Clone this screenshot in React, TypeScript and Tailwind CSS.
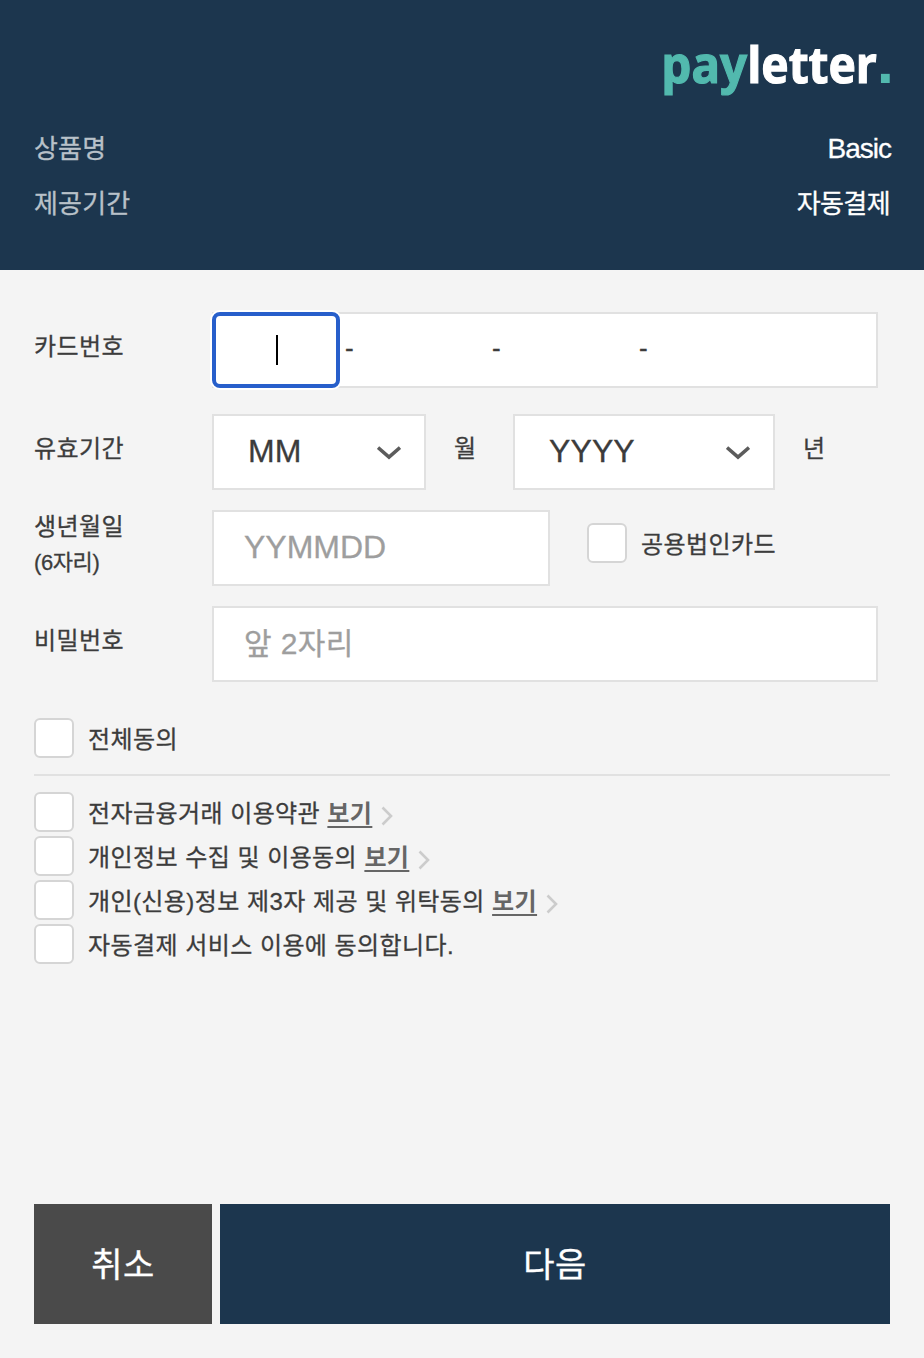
import type { ReactNode } from 'react';

const TERMS = [
  { label: '전자금융거래 이용약관', hasLink: true },
  { label: '개인정보 수집 및 이용동의', hasLink: true },
  { label: '개인(신용)정보 제3자 제공 및 위탁동의', hasLink: true },
  { label: '자동결제 서비스 이용에 동의합니다.', hasLink: false },
];

function Logo() {
  return (
    <svg
      width="226"
      height="50"
      viewBox="0 0 226 50"
      className="block overflow-visible font-['Noto_Sans'] font-bold tracking-normal [-webkit-text-stroke:0]"
      fontSize="51"
    >
      <text x="-2.5" y="38.5" textLength="85.5" lengthAdjust="spacingAndGlyphs" fill="#52b9ae" stroke="#52b9ae" strokeWidth="1.2">
        pay
      </text>
      <text x="83.5" y="38.5" textLength="129" lengthAdjust="spacingAndGlyphs" fill="#ffffff" stroke="#ffffff" strokeWidth="1.2">
        letter
      </text>
      <text x="212.8" y="39" fontSize="62" className="font-['Liberation_Sans']" fill="#52b9ae">
        .
      </text>
    </svg>
  );
}

function Checkbox() {
  return (
    <input
      type="checkbox"
      className="block size-10 shrink-0 appearance-none rounded-md border-2 border-[#d5d5d5] bg-white"
    />
  );
}

interface SelectBoxProps {
  value: string;
  className: string;
}

function SelectBox({ value, className }: SelectBoxProps) {
  return (
    <button
      className={`flex h-[76px] items-center justify-between border-2 border-[#e1e1e1] bg-white pl-[34px] pr-[23px] text-[32px] tracking-[0.1px] ${className}`}
    >
      <span className="-mt-0.5">{value}</span>
      <svg width="24" height="14" viewBox="0 0 24 14" fill="none" className="mt-px">
        <path d="M1 1.5L12 11L23 1.5" stroke="#5c5c5c" strokeWidth="3.6" />
      </svg>
    </button>
  );
}

interface FormRowProps {
  label: ReactNode;
  children: ReactNode;
}

function FormRow({ label, children }: FormRowProps) {
  return (
    <div className="flex h-[76px]">
      <div className="w-[178px] shrink-0">{label}</div>
      {children}
    </div>
  );
}

export default function App() {
  return (
    <div className="flex h-[1358px] w-[924px] flex-col bg-[#f4f4f4] font-['Liberation_Sans','Noto_Sans_CJK_KR',sans-serif] text-2xl tracking-[0.4px] text-[#3c3c3c] [-webkit-text-stroke:0.3px]">
      <header className="h-[270px] bg-[#1c364e] px-[34px] pt-11">
        <div className="flex justify-end">
          <Logo />
        </div>
        <dl className="mt-[27px] text-[26px] leading-[56px] tracking-[0.2px]">
          <div className="flex justify-between">
            <dt className="text-[#b8c1c9]">상품명</dt>
            <dd className="-mr-px text-[28px] tracking-[-1px] text-white">Basic</dd>
          </div>
          <div className="-mt-px flex justify-between">
            <dt className="text-[#b8c1c9]">제공기간</dt>
            <dd className="tracking-[-0.6px] text-white">자동결제</dd>
          </div>
        </dl>
      </header>

      <main className="flex-1 px-[34px] pt-[42px]">
        <FormRow label={<p className="leading-[70px]">카드번호</p>}>
          <div className="flex w-[666px] items-center border-2 border-[#e1e1e1] bg-white">
            <div className="-ml-0.5 flex h-[76px] w-32 shrink-0 items-center justify-center rounded-lg border-4 border-[#275fcb] bg-white shadow-[0_0_0_2px_#ffffff]">
              <span className="h-[30px] w-0.5 translate-x-px bg-black" />
            </div>
            <span className="-mt-1 ml-[5px] w-[147px] text-[26px]">-</span>
            <span className="-mt-1 w-[147px] text-[26px]">-</span>
            <span className="-mt-1 text-[26px]">-</span>
          </div>
        </FormRow>

        <div className="mt-[26px]">
          <FormRow label={<p className="leading-[70px]">유효기간</p>}>
            <SelectBox value="MM" className="w-[214px]" />
            <span className="ml-7 w-[59px] leading-[70px]">월</span>
            <SelectBox value="YYYY" className="w-[262px]" />
            <span className="ml-7 leading-[70px]">년</span>
          </FormRow>
        </div>

        <div className="mt-5">
          <FormRow
            label={
              <>
                <p className="leading-[34px]">생년월일</p>
                <p className="text-[22px] leading-[38px] tracking-[-0.4px]">(6자리)</p>
              </>
            }
          >
            <input
              placeholder="YYMMDD"
              className="w-[338px] border-2 border-[#e1e1e1] bg-white pb-0.5 pl-[30px] text-[32px] tracking-normal placeholder:text-[#9e9e9e]"
            />
            <label className="ml-[37px] mt-[13px] flex h-10 items-center gap-3.5">
              <Checkbox />
              <span className="mt-[3px]">공용법인카드</span>
            </label>
          </FormRow>
        </div>

        <div className="mt-5">
          <FormRow label={<p className="leading-[70px]">비밀번호</p>}>
            <input
              placeholder="앞 2자리"
              className="w-[666px] border-2 border-[#e1e1e1] bg-white pl-[30px] text-[30px] tracking-[0.4px] placeholder:text-[#9e9e9e]"
            />
          </FormRow>
        </div>

        <label className="mt-9 flex items-center gap-3.5 border-b-2 border-[#e1e1e1] pb-4">
          <Checkbox />
          <span className="mt-[3px]">전체동의</span>
        </label>

        <ul className="mt-4 flex flex-col gap-1">
          {TERMS.map((term) => (
            <li key={term.label} className="flex h-10 items-center">
              <Checkbox />
              <span className="ml-3.5 mt-[3px] whitespace-pre [word-spacing:0.2px]">{term.label} </span>
              {term.hasLink && (
                <>
                  <a className="mt-[3px] font-bold text-[#666666] underline decoration-2 underline-offset-4 [-webkit-text-stroke:0]">
                    보기
                  </a>
                  <svg width="12" height="20" viewBox="0 0 12 20" fill="none" className="ml-[9px] mt-[7px]">
                    <path d="M1.5 1.5L10 10L1.5 18.5" stroke="#cccccc" strokeWidth="2.6" />
                  </svg>
                </>
              )}
            </li>
          ))}
        </ul>
      </main>

      <footer className="flex gap-2 px-[34px] pb-[34px] text-[34px] text-white">
        <button className="h-[120px] w-[178px] bg-[#4a4a4a] pt-[3px]">취소</button>
        <button className="h-[120px] flex-1 bg-[#1c364e] pt-[3px]">다음</button>
      </footer>
    </div>
  );
}
